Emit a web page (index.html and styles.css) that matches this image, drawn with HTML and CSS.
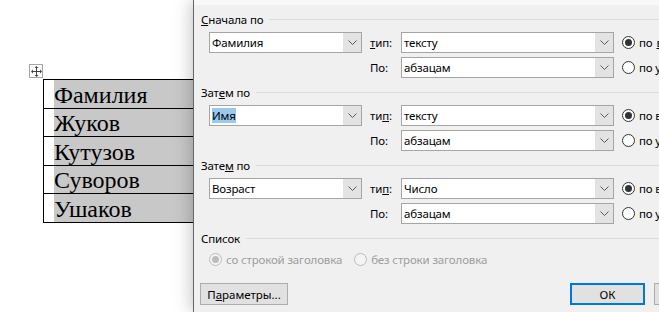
FILE: index.html
```html
<!DOCTYPE html>
<html lang="ru">
<head>
<meta charset="utf-8">
<title>Сортировка</title>
<link rel="stylesheet" href="styles.css">
</head>
<body>
<div class="screen">
  <div class="doc">
    <div class="move-handle">
      <svg width="11" height="11" viewBox="0 0 11 11"><path d="M5.5 1.5v8M1.5 5.5h8" stroke="#444" fill="none"/><path d="M5.5 0l-2 2h4zM5.5 11l-2-2h4zM0 5.5l2-2v4zM11 5.5l-2-2v4z" fill="#444"/></svg>
    </div>
    <div class="doc-table">
      <div class="doc-row"><div class="cell-text">Фамилия</div></div>
      <div class="doc-row"><div class="cell-text">Жуков</div></div>
      <div class="doc-row"><div class="cell-text">Кутузов</div></div>
      <div class="doc-row"><div class="cell-text">Суворов</div></div>
      <div class="doc-row"><div class="cell-text">Ушаков</div></div>
    </div>
  </div>

  <div class="dialog">
    <section class="group">
      <div class="group-head"><span class="group-title"><u>С</u>начала по</span><span class="rule"></span></div>
      <div class="sort-grid">
        <div class="combo"><span class="combo-value">Фамилия</span><span class="combo-btn"><svg width="9" height="5" viewBox="0 0 9 5"><path d="M0.5 0.5l4 4 4-4" stroke="#5a5a5a" fill="none"/></svg></span></div>
        <span class="field-label"><u>т</u>ип:</span>
        <div class="combo"><span class="combo-value">тексту</span><span class="combo-btn"><svg width="9" height="5" viewBox="0 0 9 5"><path d="M0.5 0.5l4 4 4-4" stroke="#5a5a5a" fill="none"/></svg></span></div>
        <label class="radio"><span class="radio-dot checked"></span>по <u>в</u>озрастанию</label>
        <span></span>
        <span class="field-label">По:</span>
        <div class="combo"><span class="combo-value">абзацам</span><span class="combo-btn"><svg width="9" height="5" viewBox="0 0 9 5"><path d="M0.5 0.5l4 4 4-4" stroke="#5a5a5a" fill="none"/></svg></span></div>
        <label class="radio"><span class="radio-dot"></span>по убыванию</label>
      </div>
    </section>

    <section class="group">
      <div class="group-head"><span class="group-title">Зат<u>е</u>м по</span><span class="rule"></span></div>
      <div class="sort-grid">
        <div class="combo"><span class="combo-value"><span class="sel">Имя</span></span><span class="combo-btn"><svg width="9" height="5" viewBox="0 0 9 5"><path d="M0.5 0.5l4 4 4-4" stroke="#5a5a5a" fill="none"/></svg></span></div>
        <span class="field-label">ти<u>п</u>:</span>
        <div class="combo"><span class="combo-value">тексту</span><span class="combo-btn"><svg width="9" height="5" viewBox="0 0 9 5"><path d="M0.5 0.5l4 4 4-4" stroke="#5a5a5a" fill="none"/></svg></span></div>
        <label class="radio"><span class="radio-dot checked"></span>по возрастанию</label>
        <span></span>
        <span class="field-label">По:</span>
        <div class="combo"><span class="combo-value">абзацам</span><span class="combo-btn"><svg width="9" height="5" viewBox="0 0 9 5"><path d="M0.5 0.5l4 4 4-4" stroke="#5a5a5a" fill="none"/></svg></span></div>
        <label class="radio"><span class="radio-dot"></span>по убыванию</label>
      </div>
    </section>

    <section class="group">
      <div class="group-head"><span class="group-title">Зате<u>м</u> по</span><span class="rule"></span></div>
      <div class="sort-grid">
        <div class="combo"><span class="combo-value">Возраст</span><span class="combo-btn"><svg width="9" height="5" viewBox="0 0 9 5"><path d="M0.5 0.5l4 4 4-4" stroke="#5a5a5a" fill="none"/></svg></span></div>
        <span class="field-label">ти<u>п</u>:</span>
        <div class="combo"><span class="combo-value">Число</span><span class="combo-btn"><svg width="9" height="5" viewBox="0 0 9 5"><path d="M0.5 0.5l4 4 4-4" stroke="#5a5a5a" fill="none"/></svg></span></div>
        <label class="radio"><span class="radio-dot checked"></span>по возрастанию</label>
        <span></span>
        <span class="field-label">По:</span>
        <div class="combo"><span class="combo-value">абзацам</span><span class="combo-btn"><svg width="9" height="5" viewBox="0 0 9 5"><path d="M0.5 0.5l4 4 4-4" stroke="#5a5a5a" fill="none"/></svg></span></div>
        <label class="radio"><span class="radio-dot"></span>по убыванию</label>
      </div>
    </section>

    <section class="list-group">
      <div class="group-head"><span class="group-title">Список</span><span class="rule"></span></div>
      <div class="list-options">
        <label class="radio disabled"><span class="radio-dot checked"></span>со строкой заголовка</label>
        <label class="radio disabled"><span class="radio-dot"></span>без строки заголовка</label>
      </div>
    </section>

    <div class="actions">
      <button class="btn btn-params">П<u>а</u>раметры...</button>
      <div class="actions-right">
        <button class="btn btn-ok">ОК</button>
        <button class="btn btn-cancel">Отмена</button>
      </div>
    </div>
  </div>
</div>
</body>
</html>
```

FILE: styles.css
```css
* { box-sizing: border-box; }
html, body { margin: 0; padding: 0; background: #fff; overflow: hidden; }

.screen {
  display: flex;
  width: 659px;
  height: 312px;
  overflow: hidden;
}

/* Document side */
.doc {
  flex: none;
  width: 193px;
  padding: 64px 0 0 29px;
  overflow: hidden;
}
.move-handle {
  width: 14px;
  height: 14px;
  border: 1px solid #a6a6a6;
  background: #fff;
  display: flex;
  align-items: center;
  justify-content: center;
}
.doc-table {
  width: 220px;
  margin: 1px 0 0 14px;
  border-top: 1px solid #000;
  border-left: 1px solid #000;
  font-family: "Liberation Serif", "Times New Roman", serif;
  font-size: 24px;
  color: #000;
}
.doc-row {
  height: 28.6px;
  border-bottom: 1px solid #000;
  padding-left: 10px;
  display: flex;
}
.cell-text {
  flex: 1;
  background: #c8c8c8;
  display: flex;
  align-items: flex-end;
  line-height: 26px;
  white-space: nowrap;
}

/* Dialog */
.dialog {
  flex: none;
  width: 545px;
  position: relative;
  border-left: 1px solid #666;
  background: linear-gradient(#f8f8f8 0, #f8f8f8 5px, #f0f0f0 5px);
  padding: 12px 9px 0 6px;
  font-family: "Noto Sans", sans-serif;
  font-size: 11.5px;
  letter-spacing: -0.15px;
  color: #000;
  box-shadow: 0 0 18px rgba(0, 0, 0, 0.28);
}
.group { margin-bottom: 7px; }
.group-head {
  display: flex;
  align-items: center;
  height: 14px;
  padding-left: 1px;
  gap: 6px;
  margin-bottom: 6px;
  white-space: nowrap;
}
.rule { flex: 1; height: 1px; background: #dcdcdc; }

.sort-grid {
  display: grid;
  grid-template-columns: 153px 39px 213px 1fr;
  grid-template-rows: 21px 21px;
  row-gap: 4px;
  margin-left: 9px;
  align-items: center;
}
.field-label { padding-left: 8px; white-space: nowrap; }
.combo {
  height: 21px;
  border: 1px solid #a5a5a5;
  background: #fff;
  display: flex;
}
.combo-value {
  flex: 1;
  padding-left: 2px;
  line-height: 19px;
  white-space: nowrap;
  overflow: hidden;
}
.sel { background: #99c9ef; }
.combo-btn {
  width: 18px;
  background: #e3e3e3;
  display: flex;
  align-items: center;
  justify-content: center;
}
.combo-btn svg { display: block; }

.radio {
  display: flex;
  align-items: center;
  gap: 4px;
  white-space: nowrap;
}
.sort-grid .radio { padding-left: 8px; }
.radio-dot {
  flex: none;
  width: 13px;
  height: 13px;
  border: 1px solid #333;
  border-radius: 50%;
  background: #fff;
  position: relative;
}
.radio-dot.checked::after {
  content: "";
  position: absolute;
  inset: 2px;
  border-radius: 50%;
  background: #333;
}
.radio.disabled { color: #9d9d9d; }
.radio.disabled .radio-dot { border-color: #bcbcbc; background: #f4f4f4; }
.radio.disabled .radio-dot.checked::after { background: #bcbcbc; }

.list-options {
  display: flex;
  align-items: center;
  gap: 12px;
  height: 15px;
  margin: 7px 0 0 9px;
}

.actions {
  display: flex;
  justify-content: space-between;
  margin-top: 16px;
}
.actions-right { display: flex; gap: 9px; }
.btn {
  height: 22px;
  padding: 0;
  border: 1px solid #adadad;
  background: #e1e1e1;
  font: inherit;
  color: #000;
}
.btn-params { width: 88px; }
.btn-ok { width: 75px; border: 2px solid #0078d7; }
.btn-cancel { width: 75px; }
```
